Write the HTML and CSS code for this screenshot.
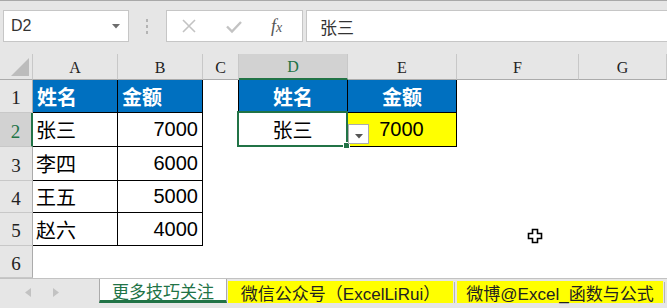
FILE: index.html
```html
<!DOCTYPE html>
<html lang="zh-CN">
<head>
    <meta charset="UTF-8">
    <meta name="viewport" content="width=device-width, initial-scale=1.0">
    <title>数据有效性 - 下拉查询</title>
    <link rel="stylesheet" href="styles.css">
</head>
<body>
    <!-- 名称框 + 编辑栏 -->
    <div class="topbar">
        <div class="namebox">
            <span>D2</span>
            <svg class="caret" width="8" height="5" viewBox="0 0 8 5"><path d="M0 0h8L4 4.5z" fill="#6d6d6d"/></svg>
        </div>
        <div class="grip"><i></i><i></i><i></i></div>
        <div class="fxbox">
            <svg class="fxbtn" width="16" height="16" viewBox="0 0 16 16"><path d="M2 2l12 12M14 2L2 14" stroke="#c3c3c3" stroke-width="1.6" fill="none"/></svg>
            <svg class="fxbtn" width="16" height="16" viewBox="0 0 16 16"><path d="M1 8.5l5 5L15 4" stroke="#c3c3c3" stroke-width="2.4" fill="none"/></svg>
            <span class="fxbtn fx">f<small>x</small></span>
        </div>
        <div class="formula">张三</div>
    </div>

    <!-- 工作表区域 -->
    <div class="sheet">
        <div class="cell colhead corner"><svg width="18" height="18" viewBox="0 0 18 18"><path d="M18 0v18H0z" fill="#bcbcbc"/></svg></div>
        <div class="cell colhead">A</div>
        <div class="cell colhead">B</div>
        <div class="cell colhead">C</div>
        <div class="cell colhead sel">D</div>
        <div class="cell colhead">E</div>
        <div class="cell colhead">F</div>
        <div class="cell colhead">G</div>

        <div class="cell rowhead">1</div>
        <div class="cell hd bd">姓名</div>
        <div class="cell hd bd">金额</div>
        <div class="cell edge"></div>
        <div class="cell hd bd ctr">姓名</div>
        <div class="cell hd bd ctr">金额</div>
        <div class="cell"></div>
        <div class="cell"></div>

        <div class="cell rowhead sel">2</div>
        <div class="cell bd">张三</div>
        <div class="cell bd num">7000</div>
        <div class="cell edge"></div>
        <div class="cell bd ctr active">
            张三
            <div class="selbox"><span class="handle"></span></div>
            <div class="dropbtn"><svg width="8" height="5" viewBox="0 0 8 5"><path d="M0 0h8L4 4.5z" fill="#555"/></svg></div>
        </div>
        <div class="cell bd ctr yel">7000</div>
        <div class="cell"></div>
        <div class="cell"></div>

        <div class="cell rowhead">3</div>
        <div class="cell bd">李四</div>
        <div class="cell bd num">6000</div>
        <div class="cell"></div>
        <div class="cell"></div>
        <div class="cell"></div>
        <div class="cell"></div>
        <div class="cell"></div>

        <div class="cell rowhead">4</div>
        <div class="cell bd">王五</div>
        <div class="cell bd num">5000</div>
        <div class="cell"></div>
        <div class="cell"></div>
        <div class="cell"></div>
        <div class="cell"></div>
        <div class="cell"></div>

        <div class="cell rowhead">5</div>
        <div class="cell bd">赵六</div>
        <div class="cell bd num">4000</div>
        <div class="cell"></div>
        <div class="cell"></div>
        <div class="cell"></div>
        <div class="cell"></div>
        <div class="cell"></div>

        <div class="cell rowhead">6</div>
        <div class="cell"></div>
        <div class="cell"></div>
        <div class="cell"></div>
        <div class="cell"></div>
        <div class="cell"></div>
        <div class="cell"></div>
        <div class="cell"></div>

        <!-- 鼠标指针 -->
        <svg class="pointer" width="16" height="16" viewBox="0 0 16 16">
            <path d="M5.5 1.5h5v4h4v5h-4v4h-5v-4h-4v-5h4z" fill="#fff" stroke="#000" stroke-width="1.6"/>
        </svg>
    </div>

    <!-- 工作表标签 -->
    <div class="tabs">
        <div class="nav">
            <svg width="6" height="9" viewBox="0 0 6 9"><path d="M6 0v9L0 4.5z" fill="#c2c2c2"/></svg>
            <svg width="6" height="9" viewBox="0 0 6 9"><path d="M0 0v9l6-4.5z" fill="#c2c2c2"/></svg>
        </div>
        <div class="tab current">更多技巧关注</div>
        <div class="tab yellow wide">微信公众号（ExcelLiRui）</div>
        <span class="sep"></span>
        <div class="tab yellow">微博@Excel_函数与公式</div>
        <span class="sep"></span>
    </div>
</body>
</html>
```

FILE: styles.css
```css
/* 仿 Excel 界面 */
body {
    margin: 0;
    width: 667px;
    height: 308px;
    overflow: hidden;
    background-color: #fff;
    font-family: "Liberation Sans", "Noto Sans CJK SC", sans-serif;
    color: #000;
}

/* 顶部编辑栏 */
.topbar {
    height: 54px;
    box-sizing: border-box;
    border-top: 1px solid #a8a8a8;
    background-color: #e6e6e6;
    display: flex;
    align-items: flex-start;
    padding: 9px 0 0 3px;
}

.namebox {
    width: 126px;
    height: 32px;
    box-sizing: border-box;
    border: 1px solid #c6c6c6;
    background-color: #fff;
    display: flex;
    align-items: center;
    justify-content: space-between;
    padding: 0 8px 0 7px;
    font-size: 16px;
    color: #333;
}

.grip {
    margin-left: 17px;
    height: 32px;
    display: flex;
    flex-direction: column;
    justify-content: center;
    gap: 3px;
}

.grip i {
    display: block;
    width: 2px;
    height: 3px;
    background-color: #b4b4b4;
}

.fxbox {
    margin-left: 18px;
    width: 137px;
    height: 32px;
    box-sizing: border-box;
    border: 1px solid #c6c6c6;
    background-color: #fff;
    display: flex;
    align-items: center;
    gap: 29px;
    padding-left: 14px;
}

.fxbtn {
    width: 16px;
    flex: none;
}

.fx {
    font-family: "Liberation Serif", serif;
    font-style: italic;
    font-size: 18px;
    color: #555;
    line-height: 1;
    white-space: nowrap;
}

.fx small {
    font-size: 14px;
}

.formula {
    flex: 1;
    margin-left: 3px;
    height: 32px;
    box-sizing: border-box;
    border: 1px solid #c6c6c6;
    border-right: none;
    background-color: #fff;
    display: flex;
    align-items: center;
    padding-left: 13px;
    font-size: 17px;
    color: #333;
}

/* 单元格网格 */
.sheet {
    position: relative;
    display: grid;
    grid-template-columns: 33px 85px 85px 36px 109px 109px 122px 88px;
    grid-template-rows: 26px 33px 34px 34px 32px 33px 32px;
}

.cell {
    box-sizing: border-box;
    border-right: 1px solid transparent;
    border-bottom: 1px solid transparent;
    display: flex;
    align-items: center;
    padding: 0 4px 0 3px;
    font-size: 20px;
    white-space: nowrap;
}

.colhead {
    background-color: #e6e6e6;
    border-right-color: #c8c8c8;
    border-bottom-color: #ababab;
    justify-content: center;
    font-family: "Liberation Serif", serif;
    font-size: 16px;
    color: #222;
    padding: 2px 0 0;
}

.corner {
    justify-content: flex-end;
    align-items: flex-end;
    padding: 0 3px 3px 0;
}

.rowhead {
    background-color: #e6e6e6;
    border-right-color: #ababab;
    border-bottom-color: #c8c8c8;
    justify-content: center;
    font-family: "Liberation Serif", serif;
    font-size: 19px;
    color: #222;
    padding: 4px 0 0;
}

.colhead.sel {
    background-color: #d2d2d2;
    color: #217346;
    border-bottom: 2px solid #217346;
}

.rowhead.sel {
    background-color: #d2d2d2;
    color: #217346;
    border-right: 2px solid #217346;
}

.hd {
    background-color: #0070c0;
    color: #fff;
    font-weight: bold;
    padding-left: 4px;
}

.bd {
    border-right-color: #000;
    border-bottom-color: #000;
}

.edge {
    border-right-color: #000;
}

.num {
    justify-content: flex-end;
}

.ctr {
    justify-content: center;
}

.yel {
    background-color: #ffff00;
}

/* 活动单元格 */
.active {
    position: relative;
}

.selbox {
    position: absolute;
    top: -2px;
    left: -2px;
    right: -1px;
    bottom: -1px;
    border: 2px solid #217346;
}

.handle {
    position: absolute;
    right: -4px;
    bottom: -4px;
    width: 5px;
    height: 5px;
    background-color: #217346;
    border: 1px solid #fff;
}

.dropbtn {
    position: absolute;
    left: 109px;
    top: 11px;
    width: 21px;
    height: 20px;
    box-sizing: border-box;
    border: 1px solid #ababab;
    background-color: #fff;
    display: flex;
    align-items: center;
    justify-content: center;
    padding-top: 4px;
}

.pointer {
    position: absolute;
    left: 527px;
    top: 174px;
}

/* 工作表标签 */
.tabs {
    height: 30px;
    box-sizing: border-box;
    border-top: 1px solid #c2c2c2;
    background-color: #e6e6e6;
    display: flex;
    align-items: flex-start;
    font-size: 17px;
}

.nav {
    width: 99px;
    height: 26px;
    display: flex;
    align-items: center;
    gap: 22px;
    padding-left: 25px;
    box-sizing: border-box;
}

.tab {
    height: 22px;
    margin-top: 2px;
    display: flex;
    align-items: center;
    justify-content: center;
    white-space: nowrap;
    color: #222;
}

.current {
    width: 128px;
    height: 24px;
    margin-top: 0;
    box-sizing: border-box;
    border-left: 1px solid #ababab;
    border-right: 1px solid #ababab;
    border-bottom: 3px solid #217346;
    background-color: #fff;
    color: #217346;
    padding-top: 2px;
}

.yellow {
    background-color: #ffff00;
    width: 206px;
}

.wide {
    width: 225px;
    margin-left: 1px;
}

.sep {
    width: 1px;
    height: 21px;
    margin: 3px 2px 0 1px;
    background-color: #b4b4b4;
}
```
